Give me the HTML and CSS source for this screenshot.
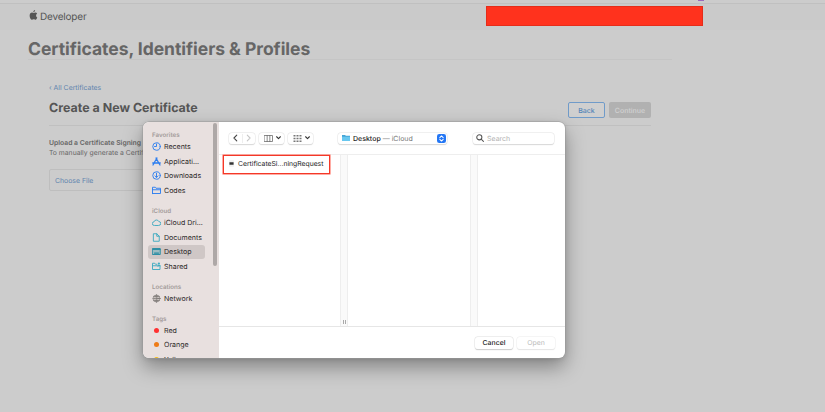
FILE: index.html
```html
<!DOCTYPE html>
<html lang="en">
<head>
<meta charset="utf-8">
<title>Certificates, Identifiers &amp; Profiles</title>
<link rel="stylesheet" href="styles.css">
</head>
<body>
<div class="browser-edge"><span class="marker"></span></div>
<header class="topbar">
  <div class="brand">
    <svg class="apple" viewBox="0 0 16 20"><path d="M11.2 0c.2 1.900-1.500 4.300-3.600 4.300C7.300 2.300 9.100.300 11.200 0zM15.500 14.800c-.900 2.500-2.500 4.700-4 4.700-1.300 0-1.800-.8-3.300-.8s-2 .8-3.300.8C2.600 19.500.3 15.200.3 11.300c0-4 2.400-6.200 4.900-6.200 1.300 0 2.300.9 3.200.9.800 0 2-.9 3.600-.9 1.300 0 2.400.6 3.200 1.700-2.900 1.800-2.700 6.600.3 8z"/></svg>
    <span>Developer</span>
  </div>
  <div class="redacted"></div>
</header>
<main>
  <h1>Certificates, Identifiers &amp; Profiles</h1>
  <section class="content">
    <a class="back-link">‹ All Certificates</a>
    <div class="heading">
      <h2>Create a New Certificate</h2>
      <div class="actions"><button class="back">Back</button><button class="continue">Continue</button></div>
    </div>
    <div class="upload">
      <p class="label">Upload a Certificate Signing</p>
      <p class="hint">To manually generate a Certif</p>
      <div class="choose">Choose File</div>
    </div>
  </section>
</main>

<div class="dialog">
  <aside class="sidebar">
    <h3>Favorites</h3>
    <ul>
      <li><svg class="ico blue" viewBox="0 0 18 18"><circle cx="9" cy="9" r="7.500"/><path d="M9 4v5H5"/></svg><span>Recents</span></li>
      <li><svg class="ico blue bold" viewBox="0 0 18 18"><path d="M8 2l5.500 10M10 2L4 12M1.500 12h15M3.500 13.500L2 16M14.500 13.500L16 16"/></svg><span>Applicati...</span></li>
      <li><svg class="ico blue" viewBox="0 0 18 18"><circle cx="9" cy="9" r="7.500"/><path d="M9 4.500v8M6 9.800l3 3 3-3"/></svg><span>Downloads</span></li>
      <li><svg class="ico blue" viewBox="0 0 18 18"><path d="M1 14.500v-12h5.500L8 4.500h9v10.500H1zM1 7.500h16"/></svg><span>Codes</span></li>
    </ul>
    <h3>iCloud</h3>
    <ul>
      <li><svg class="ico teal" viewBox="0 0 18 18"><path d="M4.500 15a3.700 3.700 0 0 1-.4-7.400A5 5 0 0 1 13.500 7a4 4 0 0 1 0 8z"/></svg><span>iCloud Dri...</span></li>
      <li><svg class="ico teal" viewBox="0 0 18 18"><path d="M3.500 1.500h6l5 5v10h-11zM9.500 1.500v5h5"/></svg><span>Documents</span></li>
      <li class="selected"><svg class="ico desktop" viewBox="0 0 18 18"><path d="M1.500 3h15v12h-15zM1.500 5h15"/><path d="M5 12h8" stroke-width="2.500"/></svg><span>Desktop</span></li>
      <li><svg class="ico teal" viewBox="0 0 18 18"><path d="M10 4.500H7l-1.500-2H1V15h15V10M1 7.500h9"/><path class="solid" d="M10 9c0-2 1.500-3.500 3.800-3.500S18 7 18 9z"/><circle class="solid" cx="13.800" cy="3.200" r="2.200"/></svg><span>Shared</span></li>
    </ul>
    <h3>Locations</h3>
    <ul>
      <li><svg class="ico gray" viewBox="0 0 18 18"><circle cx="9" cy="9" r="7"/><ellipse cx="9" cy="9" rx="3.200" ry="7"/><path d="M2 9h14M9 2v14M3.500 5h11M3.500 13h11"/></svg><span>Network</span></li>
    </ul>
    <h3>Tags</h3>
    <ul>
      <li><i class="dot red"></i><span>Red</span></li>
      <li><i class="dot orange"></i><span>Orange</span></li>
      <li><i class="dot yellow"></i><span>Yellow</span></li>
    </ul>
    <div class="scrollbar"></div>
  </aside>
  <div class="panel">
    <div class="toolbar">
      <div class="nav control">
        <span><svg viewBox="0 0 8 12"><path d="M6 1.500L1.500 6 6 10.500"/></svg></span>
        <span class="off"><svg viewBox="0 0 8 12"><path d="M2 1.500L6.500 6 2 10.500"/></svg></span>
      </div>
      <div class="view control">
        <svg class="columns" viewBox="0 0 18 14"><path d="M1 1h16v12H1zM6.300 1v12M11.700 1v12"/></svg>
        <svg class="caret" viewBox="0 0 8 6"><path d="M1 1l3 3 3-3"/></svg>
      </div>
      <div class="group control">
        <svg class="tiles" viewBox="0 0 16 14"><path d="M0 1.500h16M0 7h16M0 12.500h16"/></svg>
        <svg class="caret" viewBox="0 0 8 6"><path d="M1 1l3 3 3-3"/></svg>
      </div>
      <div class="location control">
        <svg class="folder" viewBox="0 0 18 16"><path fill="#45a5d6" d="M0 1h7l1.500 2H18v12H0z"/><path fill="#68c7ef" d="M0 5h18v10H0z"/></svg>
        <span class="place"><b>Desktop</b> — iCloud</span>
        <svg class="stepper" viewBox="0 0 16 16"><rect width="16" height="16" rx="4"/><path d="M5 6.500l3-3 3 3M5 9.500l3 3 3-3"/></svg>
      </div>
      <div class="search control">
        <svg viewBox="0 0 14 14"><circle cx="5.800" cy="5.800" r="4.500"/><path d="M9 9l4 4"/></svg>
        <span>Search</span>
      </div>
    </div>
    <div class="browser">
      <div class="column">
        <div class="file"><svg class="doc" viewBox="0 0 6 8"><path fill="#f1f1f1" d="M0 0h6v8H0z"/><path fill="#333" d="M.5 2.500h5v3h-5z"/></svg><span>CertificateSi...ningRequest</span></div>
      </div>
      <div class="gutter"><i class="grip"></i></div>
      <div class="column second"></div>
      <div class="gutter"></div>
      <div class="column last"></div>
    </div>
    <div class="footer"><button>Cancel</button><button class="disabled">Open</button></div>
  </div>
</div>
</body>
</html>
```
FILE: styles.css
```css
* { box-sizing: border-box; }
body {
  margin: 0;
  height: 412px;
  overflow: hidden;
  background: #cccccc;
  font-family: Inter, "Liberation Sans", sans-serif;
  text-rendering: geometricPrecision;
  color: #666;
  position: relative;
}
h1, h2, h3, p, ul { margin: 0; padding: 0; }
ul { list-style: none; }
button { font-family: inherit; padding: 0; text-rendering: inherit; }
svg { flex: none; fill: none; stroke-linecap: round; stroke-linejoin: round; }

.browser-edge { height: 4px; border-bottom: 1px solid #c0c0c0; display: flex; }
.marker { width: 6px; height: 1px; margin-left: 698px; background: #9868bd; }
.topbar { height: 26px; background: #cacaca; display: flex; }
.brand { display: flex; width: 458px; margin-left: 28px; padding-top: 6px; font-size: 10px; line-height: 14px; letter-spacing: -.2px; color: #555; }
.apple { width: 9px; height: 10px; margin: 0 2px 0 1px; fill: #555; }
.redacted { width: 217px; height: 20px; margin-top: 2px; background: #ff321d; box-shadow: inset 0 0 0 1px #e52c19; }

main { width: 644px; margin-left: 28px; }
h1 { height: 30px; padding-top: 9px; border-bottom: 1px solid #c5c5c5; font-size: 17.5px; line-height: 21px; font-weight: 700; letter-spacing: -.04px; color: #666; white-space: nowrap; }
.content { margin: 0 21px; padding-top: 23px; }
.back-link { display: block; font-size: 6.9px; line-height: 10px; color: #5f84ae; }
.heading { height: 33px; display: flex; justify-content: space-between; border-bottom: 1px solid #c0c0c0; }
h2 { padding-top: 8px; font-size: 12.45px; line-height: 16px; font-weight: 700; color: #555; }
.actions { display: flex; gap: 4px; padding-top: 9px; }
.actions button { height: 16px; border-radius: 2px; font-size: 7px; font-weight: 500; }
.back { width: 37px; border: 1px solid #709bc9; background: #cfcfcf; color: #5485b8; }
.continue { width: 42px; border: 0; background: #b1b1b1; color: #d2d2d2; }
.upload { width: 200px; padding-top: 12px; font-size: 6.9px; line-height: 10px; white-space: nowrap; }
.label { font-size: 6.8px; font-weight: 600; }
.hint { font-size: 6.8px; }
.choose { margin-top: 11px; height: 22px; padding-left: 5px; border: 1px solid #bebebe; border-radius: 2px; font-size: 6.9px; line-height: 21px; color: #5f84ae; }

.dialog {
  position: absolute;
  left: 143px;
  top: 122px;
  width: 422px;
  height: 236px;
  display: flex;
  overflow: hidden;
  border-radius: 6px;
  background: #fff;
  box-shadow: 0 0 0 .5px #999, 0 9px 20px rgba(0,0,0,.36), 0 1px 5px rgba(0,0,0,.12);
  color: #333;
}
.sidebar { position: relative; flex: none; width: 76px; padding: 8px 0 0 5px; background: #e8e0df; overflow: hidden; }
.sidebar h3 { height: 9px; padding-left: 4px; font-size: 6.2px; line-height: 11px; font-weight: 600; color: #a49c9b; }
.sidebar ul { margin-bottom: 8px; }
.sidebar li { width: 57px; height: 14.75px; display: flex; align-items: center; padding-left: 4px; font-size: 7.05px; white-space: nowrap; color: #2d2929; border-radius: 3px; }
.sidebar li.selected { background: #cfc7c6; }
.ico { width: 9px; height: 9px; margin-right: 3px; stroke-width: 1.9; }
.blue { stroke: #2e7eef; }
.bold { stroke-width: 2.600; }
.teal { stroke: #41abc1; }
.teal .solid { fill: #41abc1; stroke: none; }
.desktop { stroke: #288ca3; fill: #9dbcc2; }
.gray { stroke: #777270; stroke-width: 1.300; }
.dot { width: 5px; height: 5px; border-radius: 50%; margin: 0 5px 0 2px; }
.red { background: #ff3131; }
.orange { background: #ee7c18; }
.yellow { background: #f5bd18; }
.scrollbar { position: absolute; right: 2px; top: 1px; width: 4px; height: 143px; border-radius: 2px; background: #aea8a7; }

.panel { flex: none; width: 346px; display: flex; flex-direction: column; }
.toolbar { height: 33px; display: flex; align-items: center; padding-left: 10px; border-bottom: 1px solid #eee; }
.control { flex: none; height: 11px; display: flex; align-items: center; border-radius: 3px; background: #fff; box-shadow: 0 0 0 .5px #e6e6e6, 0 .5px 1px #ccc; }
.nav { width: 26px; }
.nav span { flex: 1; height: 9px; display: flex; align-items: center; justify-content: center; }
.nav .off { border-left: 1px solid #eee; }
.nav svg { width: 5px; height: 8px; stroke: #444; stroke-width: 1.700; }
.nav .off svg { stroke: #c6c6c6; }
.view, .group { width: 25px; margin-left: 4px; padding-left: 5px; gap: 3px; }
.columns { width: 9px; height: 7px; stroke: #666; stroke-width: 1.500; }
.tiles { width: 9px; height: 7px; stroke: #777; stroke-width: 3; stroke-dasharray: 4 2; stroke-linecap: butt; }
.caret { width: 5px; height: 4px; stroke: #333; stroke-width: 1.700; }
.location { width: 109px; margin-left: 25px; padding-left: 4px; }
.folder { width: 8px; height: 8px; }
.place { flex: 1; padding-left: 3px; font-size: 7px; color: #777; white-space: nowrap; }
.place b { font-weight: 500; color: #222; }
.stepper { width: 9px; height: 9px; margin-right: 1px; }
.stepper rect { fill: #2477f5; }
.stepper path { stroke: #fff; stroke-width: 1.800; }
.search { width: 81px; margin-left: 26px; padding-left: 3px; gap: 3px; font-size: 7px; color: #b0b0b0; }
.search svg { width: 8px; height: 8px; stroke: #555; stroke-width: 1.800; }
.browser { height: 171.500px; display: flex; border-bottom: 1px solid #e6e6e6; }
.column { flex: none; width: 121px; }
.second { width: 122px; }
.last { width: 87px; }
.file { width: 107px; height: 19px; margin-left: 4px; padding: 0 0 2px 5px; display: flex; align-items: center; border: 1px solid #f43828; box-shadow: 0 0 0 .5px #ff5a4a; font-size: 6.800px; line-height: 15px; white-space: nowrap; color: #222; }
.doc { width: 5px; height: 7px; margin-right: 4px; }
.gutter { flex: none; width: 8px; display: flex; align-items: flex-end; justify-content: center; background: #fafafa; border-left: 1px solid #eee; border-right: 1px solid #eee; }
.grip { width: 3px; height: 4px; margin-bottom: 2px; border-left: 1px solid #aaa; border-right: 1px solid #aaa; }
.footer { display: flex; justify-content: flex-end; gap: 4px; padding: 10px 10px 0 0; }
.footer button { width: 38px; height: 12px; border: 0; border-radius: 3px; background: #fff; box-shadow: 0 0 0 .5px #e3e3e3, 0 .5px 1px #bbb; font-size: 6.9px; font-weight: 500; color: #222; }
.footer .disabled { color: #bbb; font-weight: 400; box-shadow: 0 0 0 .5px #eee, 0 .5px 1px #ddd; }
```
